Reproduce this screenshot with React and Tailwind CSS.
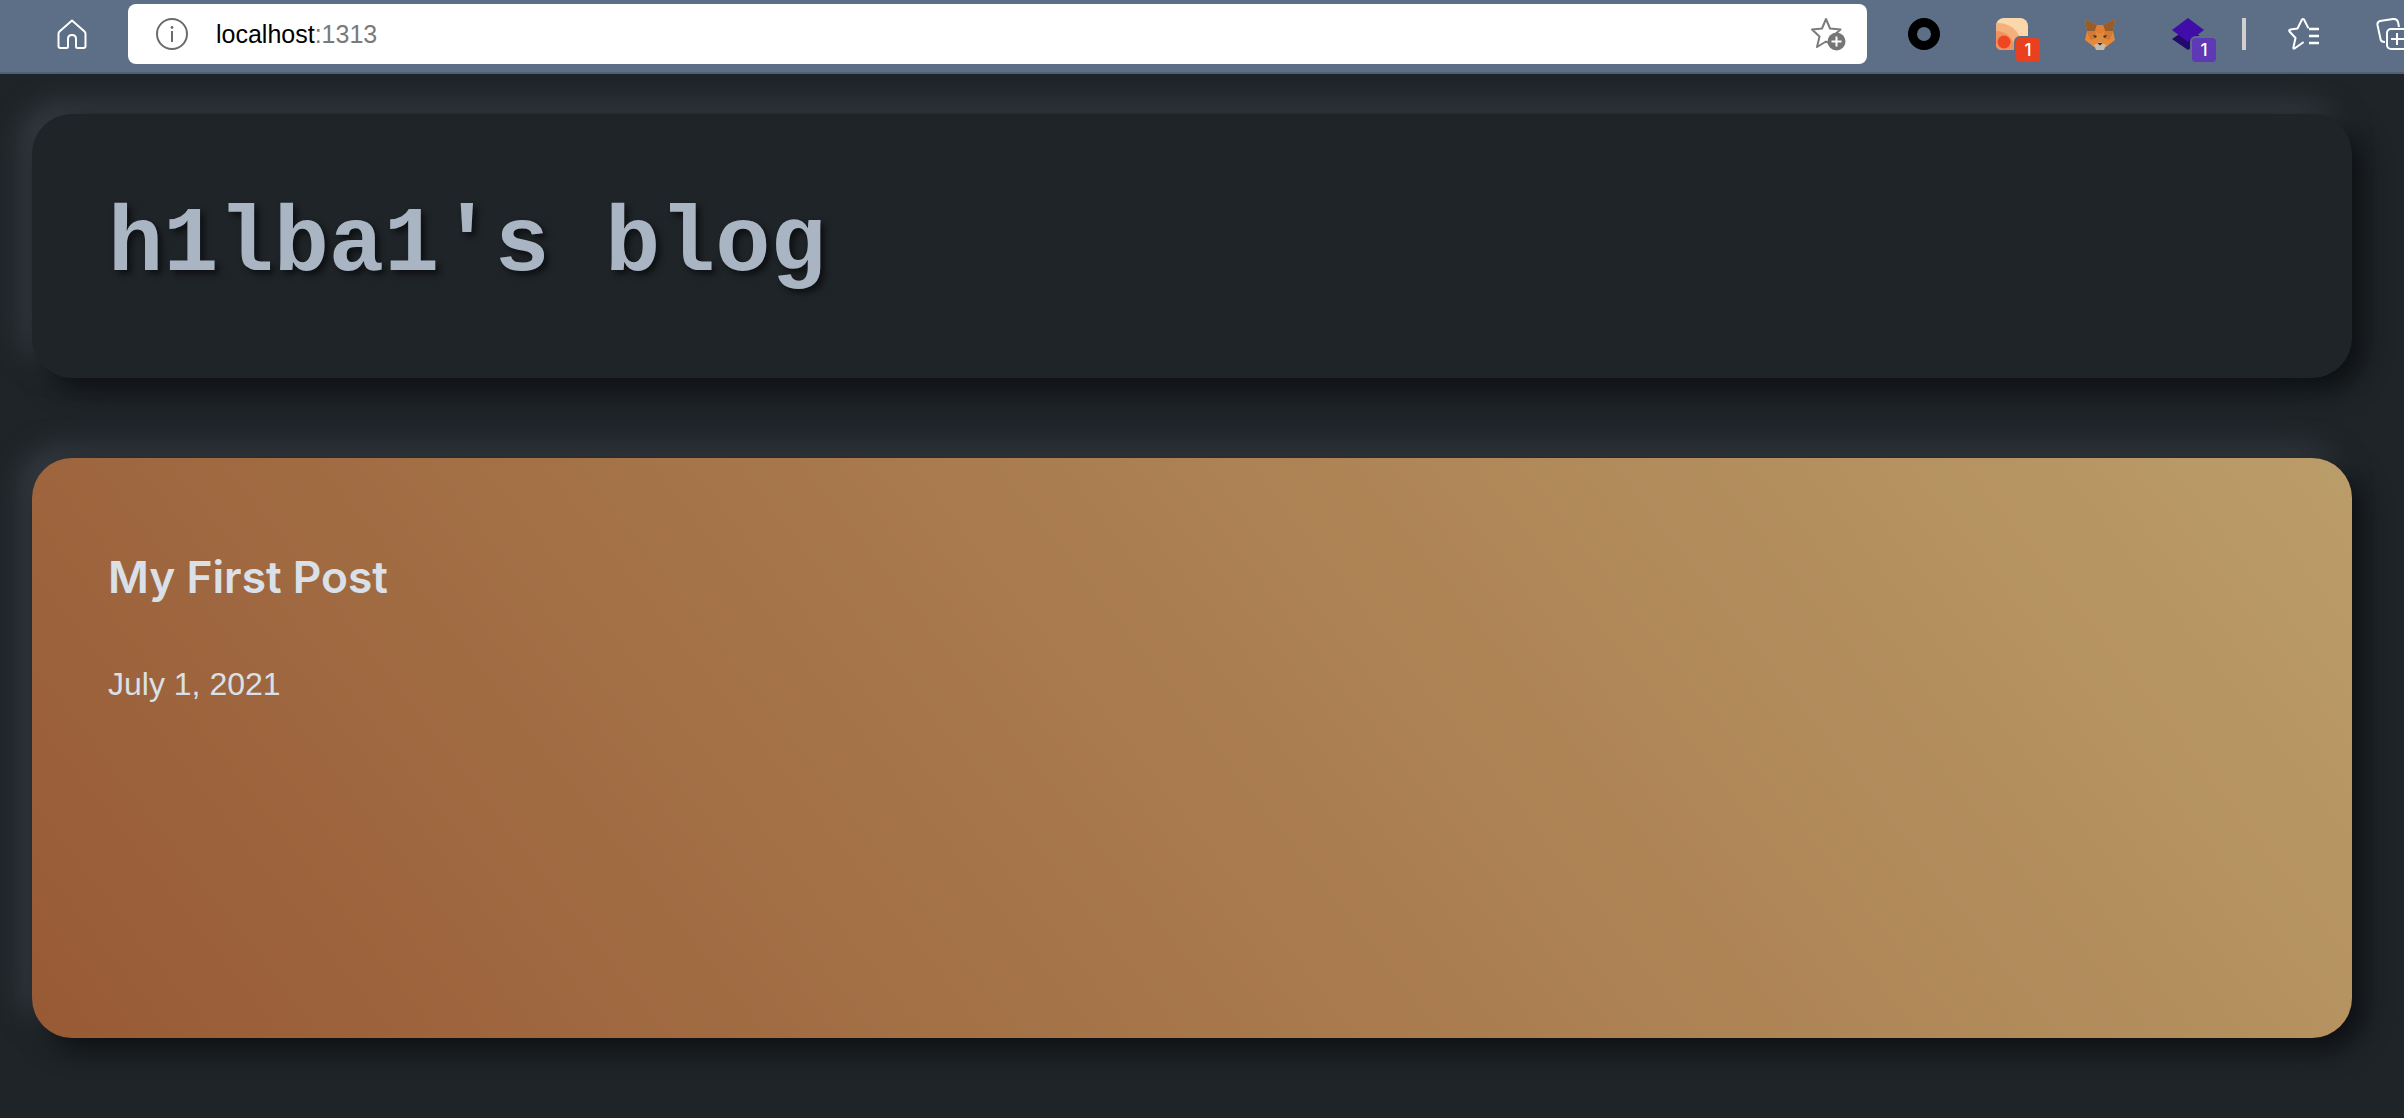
import React from "react";

const Home = () => (
  <svg width="32" height="32" viewBox="0 0 32 32" fill="none" stroke="#fff" strokeWidth="2" strokeLinejoin="round">
    <path d="M16 2.5 L3.5 13.5 Q2.5 14.5 2.5 16 V28 Q2.5 30 4.5 30 H10.5 Q12 30 12 28.5 V21 Q12 17 16 17 Q20 17 20 21 V28.5 Q20 30 21.5 30 H27.5 Q29.5 30 29.5 28 V16 Q29.5 14.5 28.5 13.5 Z" />
  </svg>
);

const Info = () => (
  <svg width="32" height="32" viewBox="0 0 32 32" fill="none">
    <circle cx="16" cy="16" r="15" stroke="#6b6b6b" strokeWidth="2" />
    <circle cx="16" cy="9.5" r="1.4" fill="#6b6b6b" />
    <rect x="15" y="13" width="2" height="11" fill="#6b6b6b" />
  </svg>
);

const StarAdd = () => (
  <svg width="36" height="36" viewBox="0 0 36 36" fill="none">
    <path d="M15 3 L19 12.5 L29.5 13.5 L21.5 20.5 L24 31 L15 25.5 L6 31 L8.5 20.5 L1 13.5 L11 12.5 Z" stroke="#7b7b7b" strokeWidth="2" strokeLinejoin="round" />
    <circle cx="25.5" cy="25.5" r="9" fill="#757575" />
    <path d="M25.5 20.5 V30.5 M20.5 25.5 H30.5" stroke="#fff" strokeWidth="2" />
  </svg>
);

const Ring = () => (
  <svg width="32" height="32" viewBox="0 0 32 32" fill="none">
    <circle cx="16" cy="16" r="11.5" stroke="#000" strokeWidth="9" />
  </svg>
);

const Fox = () => (
  <svg width="32" height="32" viewBox="0 0 32 32">
    <path d="M1 1 L13 7 H19 L31 1 L29 13 L31 22 L22 29 H10 L1 22 L3 13 Z" fill="#e58a3a" />
    <path d="M1 1 L13 7 L11 13 L3 13 Z" fill="#965c2c" />
    <path d="M31 1 L19 7 L21 13 L29 13 Z" fill="#965c2c" />
    <path d="M11 13 L16 16 L21 13 L19 7 H13 Z" fill="#e07f33" />
    <path d="M3 13 L11 13 L13 20 L6 22 Z" fill="#d27a33" />
    <path d="M29 13 L21 13 L19 20 L26 22 Z" fill="#d27a33" />
    <path d="M9 17 L13 18 L11 20 Z M23 17 L19 18 L21 20 Z" fill="#2b2b2b" />
    <path d="M10 27 L16 24 L22 27 L20 32 H12 Z" fill="#c9b9a8" />
    <path d="M13.5 25 H18.5 L16 27.5 Z" fill="#2b2b2b" />
  </svg>
);

const FeedIcon = () => (
  <svg width="32" height="32" viewBox="0 0 32 32">
    <rect width="32" height="32" rx="8" fill="#fad8ab" />
    <path d="M0 6 Q0 5 2 5 A24 24 0 0 1 26 32 H6 Q0 32 0 26 Z" fill="#f4b07a" />
    <path d="M0 13 A19 19 0 0 1 19 32 H7 Q0 32 0 25 Z" fill="#ef9160" />
    <circle cx="8" cy="24" r="6.5" fill="#ee4523" />
  </svg>
);

const Stack = () => (
  <svg width="32" height="32" viewBox="0 0 32 32">
    <path d="M16 10 L32 21 L16 32 L0 21 Z" fill="#23096e" />
    <path d="M16 0 L32 12 L16 24 L0 12 Z" fill="#400da8" />
  </svg>
);

const StarList = () => (
  <svg width="32" height="32" viewBox="0 0 32 32" fill="none" stroke="#fff" strokeWidth="2" strokeLinejoin="round" strokeLinecap="round">
    <path d="M15 24.5 L6.5 30.5 Q5 31 5.5 29 L7.5 20 L1.5 13.5 Q0.5 12 2.5 11.5 L9.5 10.5 L14 1.5 Q15 0.5 16 1.5 L20 9.5" />
    <path d="M21 11 H31 M21 18 H31 M21 25 H31" strokeLinecap="butt" strokeWidth="2.5" />
  </svg>
);

const Collections = () => (
  <svg width="40" height="32" viewBox="0 0 40 32" fill="none" stroke="#fff" strokeWidth="2" strokeLinejoin="round">
    <path d="M9 24 Q5 24 4.5 21 L1.5 7 Q1 4 4 3 L17 1 Q21 0.5 22 4 L23 9" />
    <rect x="11" y="11" width="24" height="20" rx="4" />
    <path d="M21 15 V27 M15 21 H32" />
  </svg>
);

const Badge = ({ bg, children }) => (
  <span className={`absolute left-[20px] top-[20px] flex h-[24px] w-[24px] items-center justify-center rounded-[4px] text-[17px] font-medium leading-none text-white font-['Inter',sans-serif] ${bg}`}>
    {children}
  </span>
);

const Ext = ({ children }) => <div className="flex h-full w-[88px] shrink-0 items-center justify-center">{children}</div>;

export default function App() {
  return (
    <div className="flex h-[1118px] w-[2404px] flex-col overflow-hidden bg-[#1f2428] font-['Liberation_Sans',Arial,sans-serif]">
      <header className="relative z-10 flex h-[74px] shrink-0 items-center border-b-2 border-[#505f72] bg-[#5c6f87] pb-[4px]">
        <div className="flex w-[128px] shrink-0 justify-center pl-[16px]"><Home /></div>
        <div className="flex h-[60px] w-[1739px] shrink-0 items-center rounded-[8px] bg-white pl-[28px] pr-[20px]">
          <Info />
          <div className="ml-[28px] flex-1 text-[25px] leading-none text-black">
            localhost<span className="text-[#7a7a7a]">:1313</span>
          </div>
          <StarAdd />
        </div>
        <div className="ml-[13px] flex h-full shrink-0 items-center">
          <Ext><Ring /></Ext>
          <Ext>
            <div className="relative h-[32px] w-[32px]">
              <FeedIcon />
              <Badge bg="bg-[#e9401f] ring-2 ring-[#5c6f87]">1</Badge>
            </div>
          </Ext>
          <Ext><Fox /></Ext>
          <Ext>
            <div className="relative h-[32px] w-[32px]">
              <Stack />
              <Badge bg="bg-[#5f38b5] ring-2 ring-[#5c6f87]">1</Badge>
            </div>
          </Ext>
          <div className="ml-[10px] h-[32px] w-[4px] shrink-0 bg-[#cfcfcf]" />
          <div className="ml-[42px] shrink-0"><StarList /></div>
          <div className="ml-[56px] shrink-0"><Collections /></div>
        </div>
      </header>
      <main className="flex flex-col gap-[80px] pl-[32px] pr-[52px] pt-[40px]">
        <section className="flex h-[264px] items-center rounded-[40px] bg-[#1f2428] pl-[76px] shadow-[10px_10px_28px_#0b0d0f,-10px_-10px_28px_#3a4046]">
          <h1 className="font-['Liberation_Mono',monospace] text-[92px] font-bold leading-none text-[#aab5c3] [text-shadow:4px_4px_6px_#0e1012]">
            h1lba1's blog
          </h1>
        </section>
        <section className="h-[580px] rounded-[40px] bg-[linear-gradient(52deg,#985a35,#bb9d69)] pl-[76px] pt-[97px] shadow-[10px_10px_28px_#0b0d0f,-10px_-10px_28px_#3a4046]">
          <h2 className="font-['Inter',sans-serif] text-[44.3px] font-semibold leading-none text-[#d9e0e8]">My First Post</h2>
          <p className="mt-[69px] text-[32px] leading-none text-[#d9e0e8]">July 1, 2021</p>
        </section>
      </main>
    </div>
  );
}
